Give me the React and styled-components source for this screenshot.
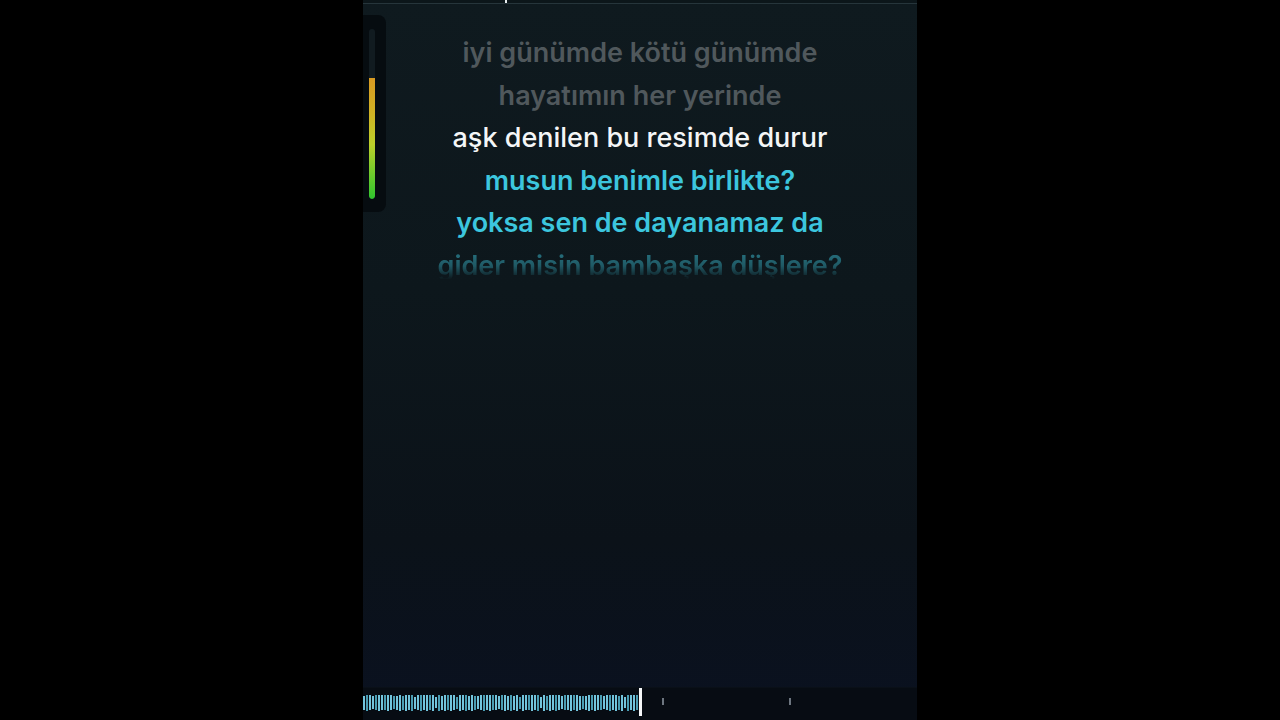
import React from "react";
import styled, { createGlobalStyle } from "styled-components";

const GlobalStyle = createGlobalStyle`
  html, body {
    margin: 0;
    padding: 0;
    background: #000;
  }
  #root {
    height: 720px;
  }
`;

const Stage = styled.div`
  height: 720px;
  display: flex;
  justify-content: center;
  background: #000;
`;

const Frame = styled.div`
  position: relative;
  width: 554px;
  height: 720px;
  display: flex;
  flex-direction: column;
  background: linear-gradient(180deg, #0f1a1f 0%, #0d171c 40%, #0b1219 75%, #0a1120 100%);
  overflow: hidden;
`;

const TopRule = styled.div`
  position: relative;
  height: 3px;
  border-bottom: 1px solid #26353b;
  background: #0c161a;
`;

const TopTick = styled.span`
  position: absolute;
  left: 142px;
  top: 0;
  width: 2px;
  height: 3px;
  background: #e8eef0;
`;

const Meter = styled.div`
  position: absolute;
  left: 0;
  top: 15px;
  width: 23px;
  height: 197px;
  background: #060c10;
  border-radius: 0 8px 8px 0;
  display: flex;
  justify-content: center;
  padding-top: 14px;
  box-sizing: border-box;
  padding-right: 6px;
`;

const MeterTrack = styled.div`
  width: 6px;
  height: 170px;
  border-radius: 3px;
  background: #111b20;
  display: flex;
  flex-direction: column;
  justify-content: flex-end;
  overflow: hidden;
`;

const MeterFill = styled.div`
  width: 100%;
  border-radius: 0 0 3px 3px;
  background: linear-gradient(180deg, #d89a22 0%, #cfb324 30%, #bcd02a 55%, #6ccb2c 80%, #2fc42e 100%);
`;

const Lyrics = styled.div`
  flex: 1;
  display: flex;
  flex-direction: column;
  align-items: center;
  padding-top: 28px;
  font-family: Inter, "Noto Sans", sans-serif;
  font-size: 27px;
`;

const tones = {
  past: { color: "#50585c", weight: 600 },
  current: { color: "#f4f6f7", weight: 500 },
  next: { color: "#3cc6de", weight: 600 },
};

const Line = styled.div`
  height: 42.5px;
  line-height: 42.5px;
  white-space: nowrap;
  color: ${(p) => tones[p.$tone].color};
  font-weight: ${(p) => tones[p.$tone].weight};
  ${(p) =>
    p.$fade &&
    `
    -webkit-mask-image: linear-gradient(180deg, rgba(0,0,0,0.85) 0%, rgba(0,0,0,0.55) 50%, rgba(0,0,0,0) 82%);
    mask-image: linear-gradient(180deg, rgba(0,0,0,0.85) 0%, rgba(0,0,0,0.55) 50%, rgba(0,0,0,0) 82%);
    color: #2f8fa0;
  `}
`;

const Timeline = styled.div`
  position: relative;
  height: 32px;
  background: #070c13;
  border-top: 1px solid #0a1018;
  display: flex;
  align-items: center;
`;

const Wave = styled.div`
  width: 275px;
  height: 16px;
  display: flex;
  align-items: center;
  gap: 1px;
  margin-bottom: 3px;
`;

const WaveBar = styled.span`
  width: 2px;
  flex: none;
  background: ${(p) => (p.$dim ? "#4a9db3" : "#72c4dc")};
`;

const Playhead = styled.span`
  width: 3px;
  height: 28px;
  margin-left: 1px;
  margin-bottom: 4px;
  background: #f5f7f8;
`;

const Marker = styled.span`
  position: absolute;
  top: 10px;
  left: ${(p) => p.$x}px;
  width: 2px;
  height: 7px;
  background: #6d7680;
`;

const lines = [
  { text: "iyi günümde kötü günümde", tone: "past" },
  { text: "hayatımın her yerinde", tone: "past" },
  { text: "aşk denilen bu resimde durur", tone: "current" },
  { text: "musun benimle birlikte?", tone: "next" },
  { text: "yoksa sen de dayanamaz da", tone: "next" },
  { text: "gider misin bambaşka düşlere?", tone: "next", fade: true },
];

const bars = Array.from({ length: 92 }, (_, i) => {
  const h = 14 + Math.round(2 * Math.abs(Math.sin(i * 1.7)) + (i % 7 === 3 ? -3 : 0));
  return { h, dim: i % 3 === 1 };
});

export default function App() {
  return (
    <>
      <GlobalStyle />
      <Stage>
        <Frame>
          <TopRule>
            <TopTick />
          </TopRule>
          <Meter>
            <MeterTrack>
              <MeterFill style={{ height: "71%" }} />
            </MeterTrack>
          </Meter>
          <Lyrics>
            {lines.map((l) => (
              <Line key={l.text} $tone={l.tone} $fade={l.fade}>
                {l.text}
              </Line>
            ))}
          </Lyrics>
          <Timeline>
            <Wave>
              {bars.map((b, i) => (
                <WaveBar key={i} $dim={b.dim} style={{ height: b.h }} />
              ))}
            </Wave>
            <Playhead />
            <Marker $x={299} />
            <Marker $x={426} />
          </Timeline>
        </Frame>
      </Stage>
    </>
  );
}
